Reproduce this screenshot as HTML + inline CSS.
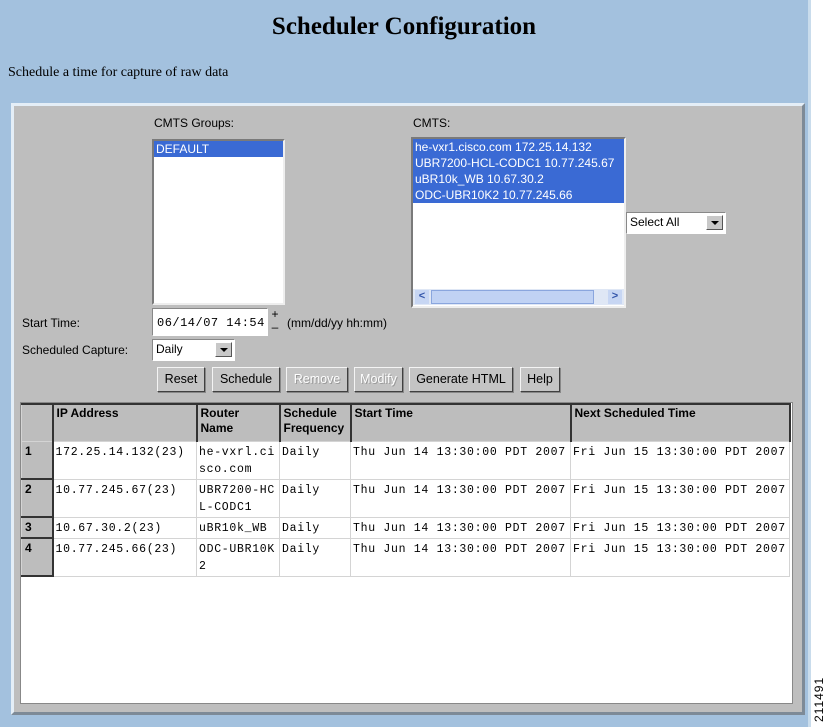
<!DOCTYPE html>
<html><head><style>
*{margin:0;padding:0;box-sizing:border-box}
body{width:825px;height:727px;background:#fff;position:relative;overflow:hidden;font-family:"Liberation Sans",sans-serif;font-size:12px;color:#000}
.a{position:absolute}
.bg{left:0;top:0;width:808px;height:727px;background:#a3c1de}
.panel{left:11px;top:103px;width:794px;height:612px;background:#bebebe;border-top:3px solid #e4eef7;border-left:3px solid #e4eef7;border-right:3px solid #7d8a97;border-bottom:3px solid #7d8a97}
.list{background:#fff;border:2px solid;border-color:#7a7a7a #eee #eee #7a7a7a}
.sel{background:#3a6ad4;color:#fff;padding-left:2px;height:16px;line-height:16px;white-space:nowrap;overflow:hidden}
.btn{top:367px;height:25px;background:#c4c4c4;border:1px solid;border-color:#f4f4f4 #404040 #404040 #f4f4f4;text-align:center;line-height:22px;font-size:12.5px;box-shadow:1px 1px 0 #888}
.dis{color:#fff;text-shadow:1px 1px 0 #999}
.drop{background:#fff;border:1px solid;border-color:#888 #fff #fff #888;padding-left:3px;line-height:19px;font-size:12px}
.arr{position:absolute;right:2px;top:2px;width:17px;height:15px;background:#c8c8c8;border:1px solid;border-color:#fff #555 #555 #fff}
.arr:after{content:"";position:absolute;left:4px;top:5px;border-left:4px solid transparent;border-right:4px solid transparent;border-top:4px solid #000}
table{border-collapse:collapse;position:absolute;left:21px;top:403px;width:768px;table-layout:fixed}
td,th{border:1px solid #d4d4d4;vertical-align:top;text-align:left;overflow:hidden}
th{background:#bdbdbd;font-size:12px;font-weight:bold;padding:1px 3px;line-height:15px;border-top:2px solid #333;border-right:2px solid #333;height:37px}
td{font-family:"Liberation Mono",monospace;font-size:11.5px;letter-spacing:0.7px;padding:2px 2px 0;line-height:17px;background:#fff;white-space:nowrap}
td.n{background:#bdbdbd;font-family:"Liberation Sans",sans-serif;font-weight:bold;font-size:12px;letter-spacing:0;border-right:2px solid #333;border-bottom:2px solid #333;padding:1px 3px}
</style></head><body>
<div class="a bg"></div>
<div class="a" style="left:808px;top:0;width:3px;height:727px;background:#c9dcec"></div>
<div class="a" style="left:0;top:13px;width:808px;text-align:center;font-family:'Liberation Serif',serif;font-weight:bold;font-size:25px">Scheduler Configuration</div>
<div class="a" style="left:8px;top:65px;font-family:'Liberation Serif',serif;font-size:14px">Schedule a time for capture of raw data</div>
<div class="a panel"></div>
<div class="a" style="left:20px;top:402px;width:773px;height:302px;background:#fff;border:1px solid #888"></div>

<div class="a" style="left:154px;top:116px">CMTS Groups:</div>
<div class="a list" style="left:152px;top:139px;width:133px;height:166px"><div class="sel">DEFAULT</div></div>

<div class="a" style="left:413px;top:116px">CMTS:</div>
<div class="a list" style="left:411px;top:137px;width:215px;height:171px;overflow:hidden">
<div class="sel">he-vxr1.cisco.com 172.25.14.132</div>
<div class="sel">UBR7200-HCL-CODC1 10.77.245.67</div>
<div class="sel">uBR10k_WB 10.67.30.2</div>
<div class="sel">ODC-UBR10K2 10.77.245.66</div>
<div class="a" style="left:0;top:150px;width:211px;height:16px;background:#dfe7f5">
<div class="a" style="left:2px;top:1px;width:14px;height:14px;background:#c7d6f3;color:#3355aa;font-size:11px;line-height:13px;text-align:center;font-weight:bold">&lt;</div>
<div class="a" style="left:18px;top:1px;width:163px;height:14px;background:#c0d2f4;border:1px solid #8aa6de"></div>
<div class="a" style="left:195px;top:1px;width:14px;height:14px;background:#c7d6f3;color:#3355aa;font-size:11px;line-height:13px;text-align:center;font-weight:bold">&gt;</div>
</div></div>

<div class="a drop" style="left:626px;top:212px;width:100px;height:22px">Select All<div class="arr"></div></div>

<div class="a" style="left:22px;top:316px">Start Time:</div>
<div class="a" style="left:152px;top:308px;width:116px;height:28px;background:#fff;border:1px solid;border-color:#888 #fff #fff #888;font-family:'Liberation Mono',monospace;font-size:12px;letter-spacing:0.5px;padding:7px 0 0 4px">06/14/07 14:54</div>
<div class="a" style="left:269px;top:308px;width:12px;height:28px;font-size:12px;line-height:13px;text-align:center">+<br>–</div>
<div class="a" style="left:287px;top:316px">(mm/dd/yy hh:mm)</div>

<div class="a" style="left:22px;top:343px">Scheduled Capture:</div>
<div class="a drop" style="left:152px;top:339px;width:83px;height:22px">Daily<div class="arr"></div></div>

<div class="a btn" style="left:157px;width:48px">Reset</div>
<div class="a btn" style="left:212px;width:68px">Schedule</div>
<div class="a btn dis" style="left:286px;width:62px">Remove</div>
<div class="a btn dis" style="left:354px;width:49px">Modify</div>
<div class="a btn" style="left:409px;width:104px">Generate HTML</div>
<div class="a btn" style="left:520px;width:40px">Help</div>

<table>
<colgroup><col style="width:31px"><col style="width:144px"><col style="width:83px"><col style="width:71px"><col style="width:220px"><col style="width:219px"></colgroup>
<tr><th style="border-top:2px solid #333"></th><th>IP Address</th><th>Router<br>Name</th><th>Schedule Frequency</th><th>Start Time</th><th>Next Scheduled Time</th></tr>
<tr style="height:38px"><td class="n">1</td><td>172.25.14.132(23)</td><td>he-vxrl.ci<br>sco.com</td><td>Daily</td><td>Thu Jun 14 13:30:00 PDT 2007</td><td>Fri Jun 15 13:30:00 PDT 2007</td></tr>
<tr style="height:38px"><td class="n">2</td><td>10.77.245.67(23)</td><td>UBR7200-HC<br>L-CODC1</td><td>Daily</td><td>Thu Jun 14 13:30:00 PDT 2007</td><td>Fri Jun 15 13:30:00 PDT 2007</td></tr>
<tr style="height:21px"><td class="n">3</td><td>10.67.30.2(23)</td><td>uBR10k_WB</td><td>Daily</td><td>Thu Jun 14 13:30:00 PDT 2007</td><td>Fri Jun 15 13:30:00 PDT 2007</td></tr>
<tr style="height:38px"><td class="n">4</td><td>10.77.245.66(23)</td><td>ODC-UBR10K<br>2</td><td>Daily</td><td>Thu Jun 14 13:30:00 PDT 2007</td><td>Fri Jun 15 13:30:00 PDT 2007</td></tr>
</table>

<div class="a" style="width:60px;transform:rotate(-90deg);transform-origin:0 0;font-size:12px;letter-spacing:1px;top:722px;left:812px">211491</div>
</body></html>
